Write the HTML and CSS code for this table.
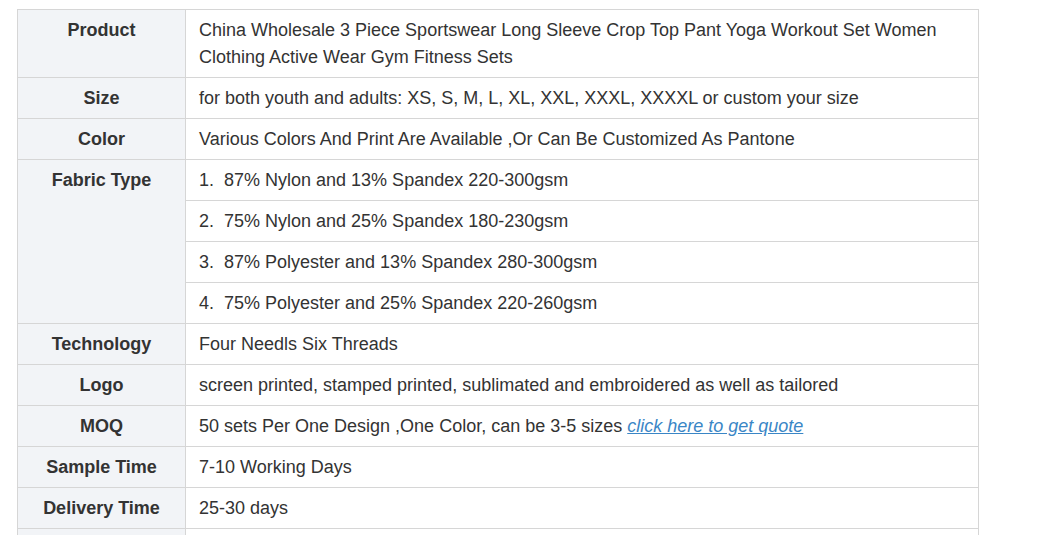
FILE: index.html
```html
<!DOCTYPE html>
<html>
<head>
<meta charset="utf-8">
<link rel="stylesheet" href="styles.css">
</head>
<body>
<table class="spec">
  <colgroup><col class="c-label"><col class="c-value"></colgroup>
  <tr><th>Product</th><td>China Wholesale 3 Piece Sportswear Long Sleeve Crop Top Pant Yoga Workout Set Women Clothing Active Wear Gym Fitness Sets</td></tr>
  <tr><th>Size</th><td>for both youth and adults: XS, S, M, L, XL, XXL, XXXL, XXXXL or custom your size</td></tr>
  <tr><th>Color</th><td>Various Colors And Print Are Available ,Or Can Be Customized As Pantone</td></tr>
  <tr><th rowspan="4">Fabric Type</th><td>1.&nbsp; 87% Nylon and 13% Spandex 220-300gsm</td></tr>
  <tr><td>2.&nbsp; 75% Nylon and 25% Spandex 180-230gsm</td></tr>
  <tr><td>3.&nbsp; 87% Polyester and 13% Spandex 280-300gsm</td></tr>
  <tr><td>4.&nbsp; 75% Polyester and 25% Spandex 220-260gsm</td></tr>
  <tr><th>Technology</th><td>Four Needls Six Threads</td></tr>
  <tr><th>Logo</th><td>screen printed, stamped printed, sublimated and embroidered as well as tailored</td></tr>
  <tr><th>MOQ</th><td>50 sets Per One Design ,One Color, can be 3-5 sizes <a class="quote" href="#">click here to get quote</a></td></tr>
  <tr><th>Sample Time</th><td>7-10 Working Days</td></tr>
  <tr><th>Delivery Time</th><td>25-30 days</td></tr>
  <tr><th>&nbsp;</th><td>&nbsp;</td></tr>
</table>
</body>
</html>
```

FILE: styles.css
```css
html, body {
  margin: 0;
  padding: 0;
  background: #ffffff;
}
body {
  padding: 9px 0 0 17px;
  font-family: "Liberation Sans", Arial, sans-serif;
  font-size: 18px;
  color: #333333;
}
.spec {
  border-collapse: collapse;
  width: 962px;
  table-layout: fixed;
}
.c-label { width: 168px; }
.spec th, .spec td {
  border: 1px solid #d6d6d6;
  line-height: 27px;
  padding: 7px 13px 6px 13px;
  vertical-align: top;
}
.spec th {
  background: #f2f4f7;
  font-weight: bold;
  text-align: center;
  color: #333333;
  padding-left: 6px;
  padding-right: 6px;
}
.spec td {
  text-align: left;
}
.quote {
  color: #3a86c6;
  font-style: italic;
  text-decoration: underline;
}
```
